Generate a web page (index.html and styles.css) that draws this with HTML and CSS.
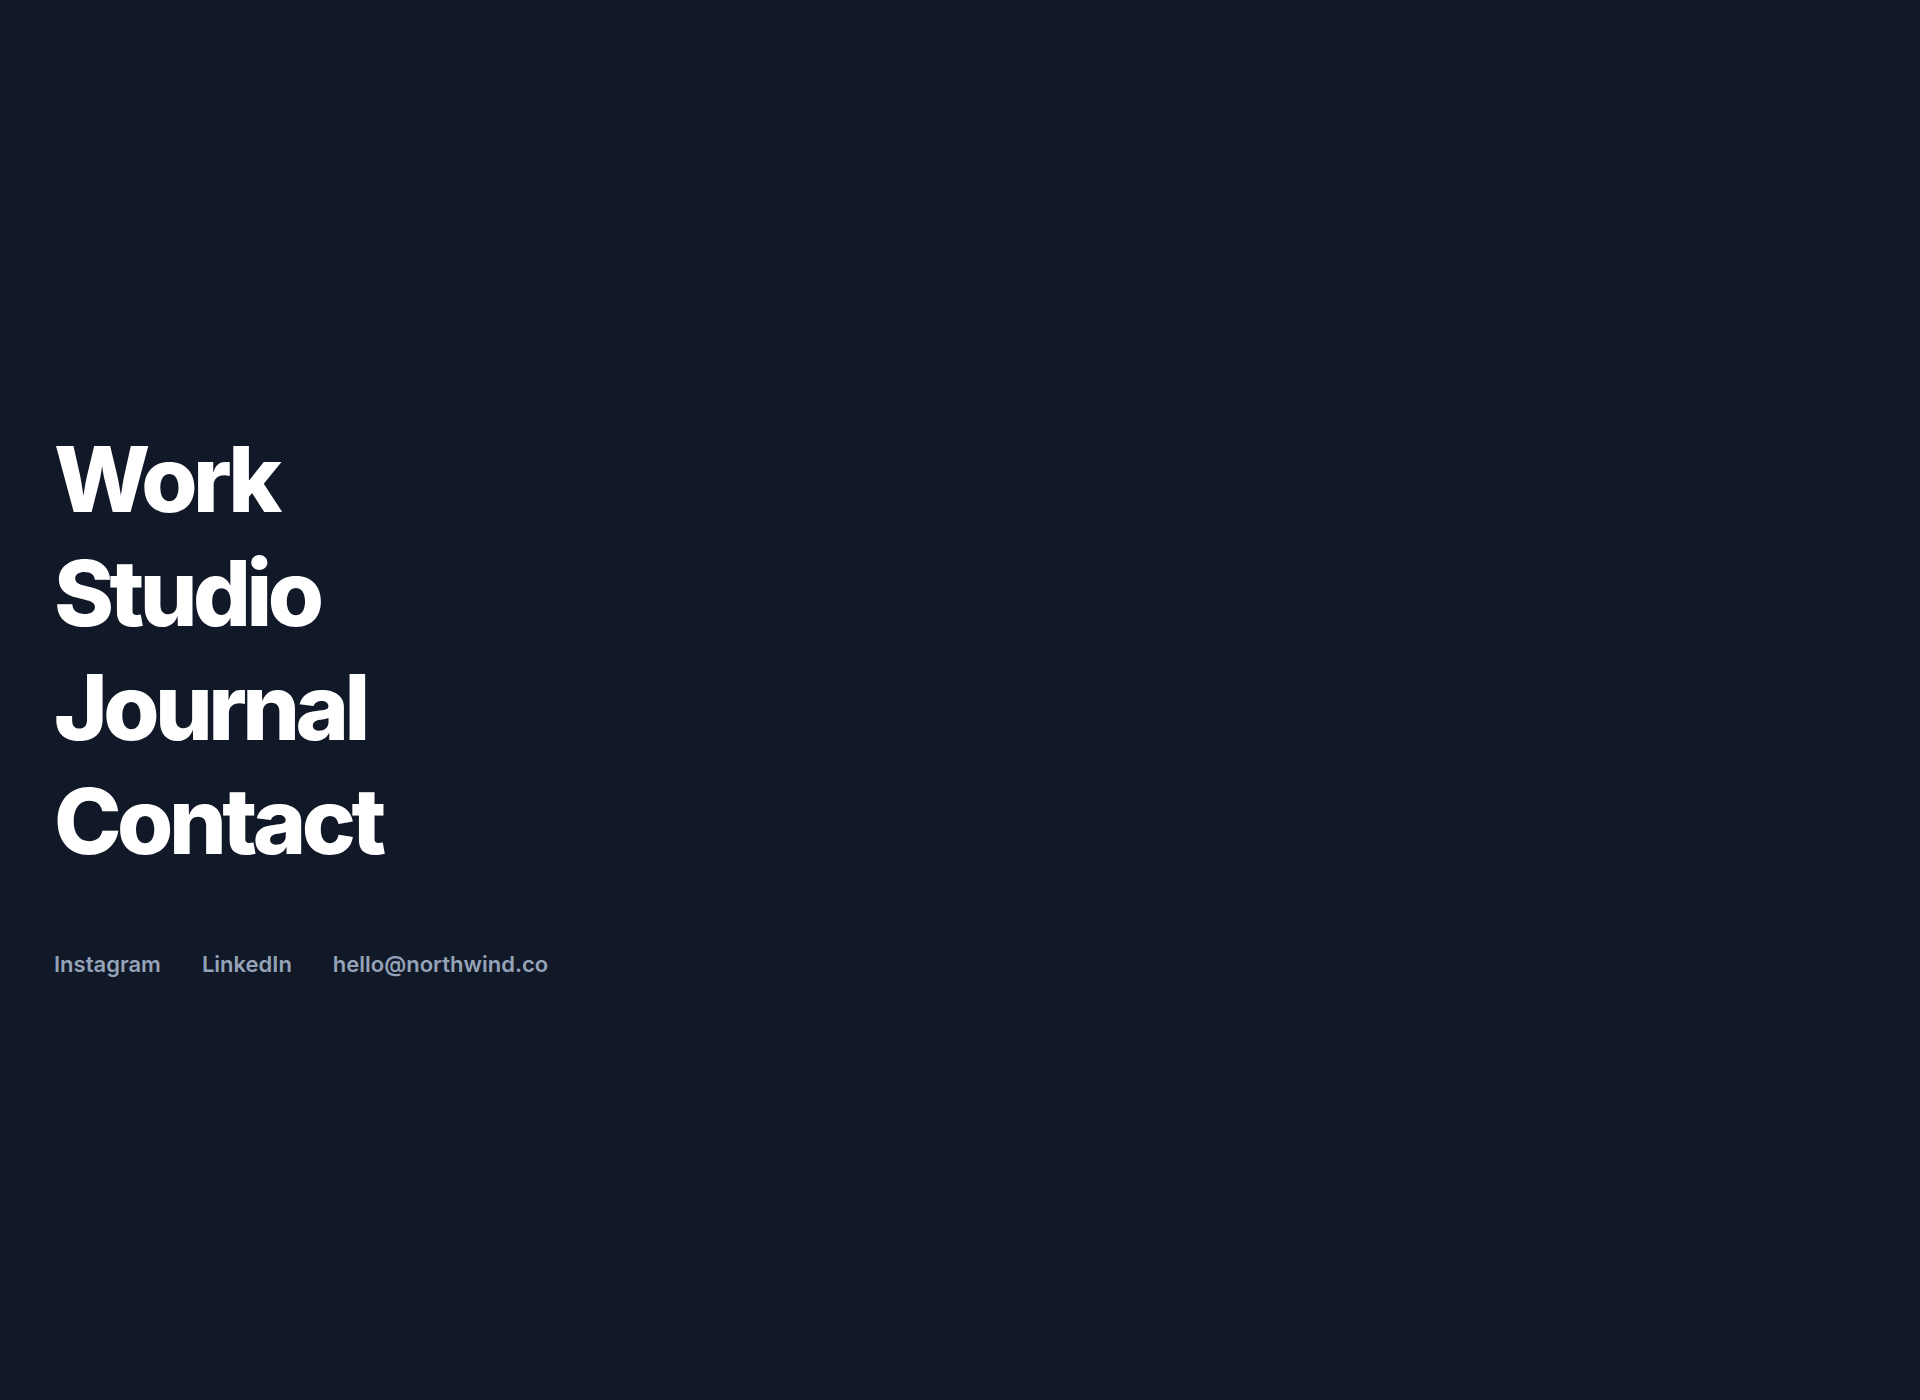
FILE: index.html
```html
<!DOCTYPE html>
<html lang="en">
<head>
<meta charset="utf-8">
<title>Northwind</title>
<link rel="stylesheet" href="styles.css">
</head>
<body>
<main class="page">
  <nav class="menu">
    <a class="menu-item" href="#">Work</a>
    <a class="menu-item" href="#">Studio</a>
    <a class="menu-item" href="#">Journal</a>
    <a class="menu-item" href="#">Contact</a>
  </nav>
  <div class="links">
    <a class="link" href="#">Instagram</a>
    <a class="link" href="#">LinkedIn</a>
    <a class="link" href="#">hello@northwind.co</a>
  </div>
</main>
</body>
</html>
```
FILE: styles.css
```css
* { box-sizing: border-box; }
html, body { margin: 0; padding: 0; }
body {
  background: #111827;
  font-family: Inter, "Noto Sans", sans-serif;
}
.page {
  min-height: 100vh;
  display: flex;
  flex-direction: column;
  justify-content: center;
  padding: 0 54px;
}
.menu {
  display: flex;
  flex-direction: column;
  align-items: flex-start;
}
.menu-item {
  color: #ffffff;
  text-decoration: none;
  font-size: 91px;
  font-weight: 800;
  line-height: 114px;
  letter-spacing: -0.05em;
}
.links {
  display: flex;
  gap: 41px;
  margin-top: 72px;
}
.link {
  color: #94a3b8;
  text-decoration: none;
  font-size: 22px;
  font-weight: 600;
  line-height: 28px;
}
```
